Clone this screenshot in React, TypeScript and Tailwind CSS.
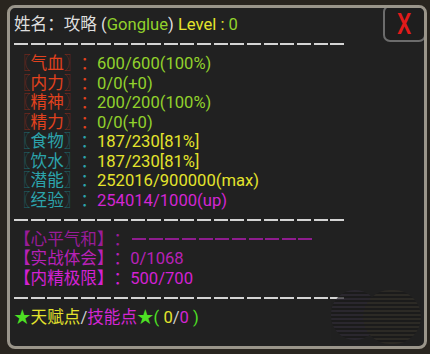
import React from 'react';

type Stat = { name: string; value: string; tone: 'red' | 'cyan'; valueColor: string };

const STATS: Stat[] = [
  { name: '气血', value: '600/600(100%)', tone: 'red', valueColor: 'text-[#92d22c]' },
  { name: '内力', value: '0/0(+0)', tone: 'red', valueColor: 'text-[#92d22c]' },
  { name: '精神', value: '200/200(100%)', tone: 'red', valueColor: 'text-[#92d22c]' },
  { name: '精力', value: '0/0(+0)', tone: 'red', valueColor: 'text-[#92d22c]' },
  { name: '食物', value: '187/230[81%]', tone: 'cyan', valueColor: 'text-[#e4e42c]' },
  { name: '饮水', value: '187/230[81%]', tone: 'cyan', valueColor: 'text-[#e4e42c]' },
  { name: '潜能', value: '252016/900000(max)', tone: 'cyan', valueColor: 'text-[#e4e42c]' },
  { name: '经验', value: '254014/1000(up)', tone: 'cyan', valueColor: 'text-[#d326d3]' },
];

const Divider: React.FC = () => (
  <div className="h-[19.5px] flex items-center">
    <div className="h-[2px] w-[333px] bg-[image:repeating-linear-gradient(90deg,#d4d4d4_0_14px,transparent_14px_16.65px)]" />
  </div>
);

const StatRow: React.FC<{ stat: Stat }> = ({ stat }) => {
  const bracket = stat.tone === 'red' ? 'text-[#8a2a1c]' : 'text-[#1f6c72]';
  const label = stat.tone === 'red' ? 'text-[#e2421e]' : 'text-[#2ca4ac]';
  return (
    <div className="h-[19.5px] whitespace-nowrap">
      <span className={bracket}>〖</span>
      <span className={label}>{stat.name}</span>
      <span className={bracket}>〗</span>
      <span className={label}>：</span>
      <span className={stat.valueColor}>{stat.value}</span>
    </div>
  );
};

export default function App() {
  return (
    <div className="w-[430px] h-[354px] bg-[#29251f] pt-[5px] pl-[7px] font-['Roboto','Noto_Sans_CJK_SC',sans-serif] text-[16.6px] leading-[19.5px] [text-spacing-trim:space-all]">
      <div className="relative w-[420px] h-[344px] rounded-[8px] border-[3px] border-[#9a958a] bg-[#212121] pt-[7px] pl-[4px] overflow-hidden">
        {/* close button */}
        <button className="absolute top-[-3px] right-[-2px] w-[43px] h-[37px] rounded-[7px] border-2 border-[#6c6c6c] bg-[#1e1e1e] flex items-center justify-center">
          <span className="text-[#e21a1a] text-[29px] leading-none font-medium font-['Roboto',sans-serif] scale-x-[0.78] pt-[2px]">X</span>
        </button>

        {/* faint emblem at bottom right */}
        <div className="absolute right-[3px] bottom-[2px] flex opacity-70">
          <div className="w-[48px] h-[50px] rounded-full bg-[image:repeating-linear-gradient(0deg,#2f2b36_0_2px,#1b1b1b_2px_4px)]" />
          <div className="w-[58px] h-[54px] -ml-[16px] rounded-full bg-[image:repeating-linear-gradient(0deg,#332f28_0_2px,#1b1b1b_2px_4px)]" />
        </div>

        <div className="h-[19.5px] whitespace-nowrap text-[#dedede]">
          姓名：攻略 (<span className="text-[#92d22c]">Gonglue</span>) <span className="text-[#e4e42c]">Level : </span>
          <span className="text-[#92d22c]">0</span>
        </div>
        <Divider />

        {STATS.map(s => (
          <StatRow key={s.name} stat={s} />
        ))}

        <Divider />

        <div className="h-[19.5px] flex items-center whitespace-nowrap text-[#991c99]">
          <span>【心平气和】：</span>
          <span className="ml-[2px] h-[2px] w-[183px] bg-[image:repeating-linear-gradient(90deg,#8e1c8e_0_14px,transparent_14px_16.65px)]" />
        </div>
        <div className="h-[19.5px] whitespace-nowrap text-[#b722b7]">【实战体会】：0/1068</div>
        <div className="h-[19.5px] whitespace-nowrap text-[#d322d3]">【内精极限】：500/700</div>

        <Divider />

        <div className="h-[19.5px] whitespace-nowrap">
          <span className="text-[#4ee024]">★</span>
          <span className="text-[#e4e42c]">天赋点</span>
          <span className="text-[#cfcfcf]">/</span>
          <span className="text-[#d326d3]">技能点</span>
          <span className="text-[#4ee024]">★( </span>
          <span className="text-[#e4e42c]">0</span>
          <span className="text-[#cfcfcf]">/</span>
          <span className="text-[#d326d3]">0</span>
          <span className="text-[#4ee024]"> )</span>
        </div>
      </div>
    </div>
  );
}
